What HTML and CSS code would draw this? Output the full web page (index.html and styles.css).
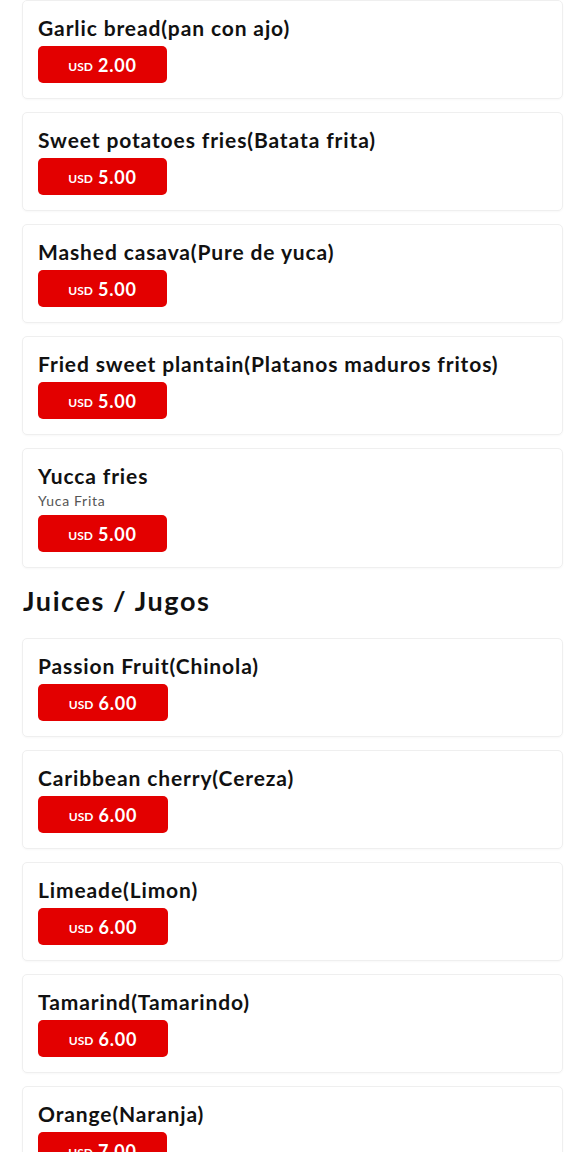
FILE: index.html
```html
<!DOCTYPE html>
<html>
<head>
<meta charset="utf-8">
<link rel="stylesheet" href="styles.css">
</head>
<body>
<main class="menu">
  <section class="list">
    <div class="card"><div class="title">Garlic bread(pan con ajo)</div><div class="price"><span class="cur">USD</span><span class="amt">2.00</span></div></div>
    <div class="card"><div class="title">Sweet potatoes fries(Batata frita)</div><div class="price"><span class="cur">USD</span><span class="amt">5.00</span></div></div>
    <div class="card"><div class="title">Mashed casava(Pure de yuca)</div><div class="price"><span class="cur">USD</span><span class="amt">5.00</span></div></div>
    <div class="card"><div class="title">Fried sweet plantain(Platanos maduros fritos)</div><div class="price"><span class="cur">USD</span><span class="amt">5.00</span></div></div>
    <div class="card"><div class="title">Yucca fries</div><div class="desc">Yuca Frita</div><div class="price"><span class="cur">USD</span><span class="amt">5.00</span></div></div>
  </section>
  <h2 class="section-title">Juices / Jugos</h2>
  <section class="list">
    <div class="card"><div class="title">Passion Fruit(Chinola)</div><div class="price wide"><span class="cur">USD</span><span class="amt">6.00</span></div></div>
    <div class="card"><div class="title">Caribbean cherry(Cereza)</div><div class="price wide"><span class="cur">USD</span><span class="amt">6.00</span></div></div>
    <div class="card"><div class="title">Limeade(Limon)</div><div class="price wide"><span class="cur">USD</span><span class="amt">6.00</span></div></div>
    <div class="card"><div class="title">Tamarind(Tamarindo)</div><div class="price wide"><span class="cur">USD</span><span class="amt">6.00</span></div></div>
    <div class="card"><div class="title">Orange(Naranja)</div><div class="price"><span class="cur">USD</span><span class="amt">7.00</span></div></div>
  </section>
</main>
</body>
</html>
```

FILE: styles.css
```css
* { box-sizing: border-box; }
html, body { margin: 0; padding: 0; background: #fff; }
body { font-family: "Lato", "Open Sans", sans-serif; color: #111; }
.menu { padding: 0 22px; }
.list { display: flex; flex-direction: column; gap: 13px; }
.card {
  border: 1px solid #efefef;
  border-radius: 5px;
  padding: 14px 15px 15px;
  display: flex;
  flex-direction: column;
  align-items: flex-start;
  box-shadow: 0 1px 2px rgba(0,0,0,0.03);
}
.title { font-size: 21px; font-weight: 700; line-height: 26px; letter-spacing: 0.88px; }
.desc { font-size: 14px; line-height: 21px; color: #555; letter-spacing: 0.7px; padding-top: 1px; }
.price {
  margin-top: 5px;
  width: 129px;
  height: 37px;
  background: #e30000;
  border-radius: 5px;
  color: #fff;
  display: flex;
  align-items: center;
  justify-content: center;
  gap: 5px;
}
.price.wide { width: 130px; }
.desc + .price { margin-top: 4px; }
.cur { font-size: 12px; font-weight: 700; padding-top: 3px; }
.amt { font-size: 18px; font-weight: 700; letter-spacing: 0.8px; }
.section-title { margin: 0; font-size: 27px; font-weight: 700; line-height: 34px; padding: 16px 0 20px 1px; letter-spacing: 1.6px; }
```
